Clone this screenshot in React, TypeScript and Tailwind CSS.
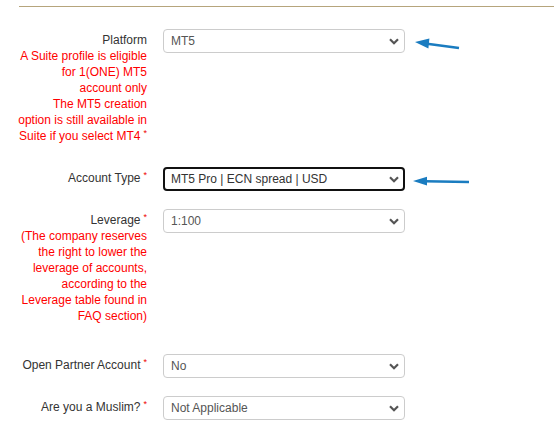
import React from 'react';

const Star = () => (
  <span className="relative top-[-4px] ml-[3px] inline-block text-[9px] leading-none text-[#e00]">*</span>
);

const Chevron = () => (
  <svg width="10" height="7" viewBox="0 0 10 7" className="shrink-0">
    <path d="M1 1.2 L5 5.2 L9 1.2" fill="none" stroke="#555" strokeWidth="2.2" />
  </svg>
);

type SelectProps = { value: string; focused?: boolean };

const FakeSelect = ({ value, focused }: SelectProps) => (
  <div
    className={
      focused
        ? 'flex items-center justify-between w-[242px] h-6 rounded-[4px] border-2 border-[#111] bg-white pl-[6px] pr-[4px] text-[12px] text-[#333]'
        : 'flex items-center justify-between w-[242px] h-6 rounded-[4px] border border-[#ccc] bg-white pl-[7px] pr-[5px] text-[12px] text-[#555]'
    }
  >
    <span className="whitespace-nowrap">{value}</span>
    <Chevron />
  </div>
);

const Arrow1 = () => (
  <svg width="54" height="16" viewBox="0 0 54 16" className="ml-[5px] mt-[7px] shrink-0">
    <line x1="17" y1="7.7" x2="49" y2="12" stroke="#1a7cc0" strokeWidth="2.6" />
    <polygon points="5,6 19.4,2.6 18.4,12.6" fill="#1a7cc0" />
  </svg>
);

const Arrow2 = () => (
  <svg width="62" height="14" viewBox="0 0 62 14" className="ml-[5px] mt-[7px] shrink-0">
    <line x1="15" y1="7.2" x2="59" y2="8" stroke="#1a7cc0" strokeWidth="2.6" />
    <polygon points="3,7 17,2.8 17,11.6" fill="#1a7cc0" />
  </svg>
);

type RowProps = {
  label: string;
  required?: boolean;
  notes?: string[];
  noteStar?: boolean;
  value: string;
  focused?: boolean;
  arrow?: React.ReactNode;
  className?: string;
};

const Row = ({ label, required, notes, noteStar, value, focused, arrow, className }: RowProps) => (
  <div className={`flex items-start ${className ?? ''}`}>
    <div className="w-[147px] shrink-0 pt-[3px] text-right text-[12px] leading-4">
      <div className="text-[#333] whitespace-nowrap">
        {label}
        {required && <Star />}
      </div>
      {notes?.map((n, i) => (
        <div key={i} className="text-[#f00] whitespace-nowrap">
          {n}
          {noteStar && i === notes.length - 1 && <Star />}
        </div>
      ))}
    </div>
    <div className="ml-4 shrink-0">
      <FakeSelect value={value} focused={focused} />
    </div>
    {arrow}
  </div>
);

export default function App() {
  return (
    <div className="w-[554px] h-[437px] overflow-hidden bg-white pt-[6px] font-['Liberation_Sans',Arial,sans-serif]">
      <div className="ml-[19px] h-px bg-[#b6a57c]" />
      <Row
        className="mt-[22px]"
        label="Platform"
        notes={[
          'A Suite profile is eligible',
          'for 1(ONE) MT5',
          'account only',
          'The MT5 creation',
          'option is still available in',
          'Suite if you select MT4',
        ]}
        noteStar
        value="MT5"
        arrow={<Arrow1 />}
      />
      <Row
        className="mt-[23px]"
        label="Account Type"
        required
        value="MT5 Pro | ECN spread | USD"
        focused
        arrow={<Arrow2 />}
      />
      <Row
        className="mt-[18px]"
        label="Leverage"
        required
        notes={[
          '(The company reserves',
          'the right to lower the',
          'leverage of accounts,',
          'according to the',
          'Leverage table found in',
          'FAQ section)',
        ]}
        value="1:100"
      />
      <Row className="mt-[30px]" label="Open Partner Account" required value="No" />
      <Row className="mt-[18px]" label="Are you a Muslim?" required value="Not Applicable" />
    </div>
  );
}
